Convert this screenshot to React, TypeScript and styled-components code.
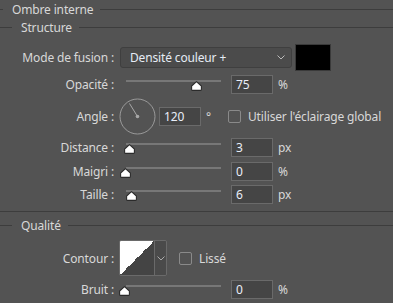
import * as React from 'react';
import styled, {createGlobalStyle} from "styled-components";

const GlobalStyle = createGlobalStyle`
  body {
    margin: 0;
    background: #535353;
  }
`

const Panel = styled.div`
  width: 393px;
  height: 303px;
  overflow: hidden;
  background: #535353;
  color: #d8d8d8;
  font-family: "Noto Sans", "Open Sans", sans-serif;
  font-size: 12px;
  letter-spacing: -0.15px;
  display: flex;
  flex-direction: column;
`

const GroupTitle = styled.div<{ indent: number; height: number }>`
  display: flex;
  align-items: center;
  height: ${p => p.height}px;
  white-space: nowrap;

  &::before {
    content: "";
    width: ${p => p.indent}px;
    height: 1px;
    background: #3d3d3d;
    margin-right: 9px;
  }

  &::after {
    content: "";
    flex: 1;
    height: 1px;
    background: #3d3d3d;
    margin-left: 7px;
  }
`

const Separator = styled.div`
  height: 1px;
  background: #3d3d3d;
  margin: 7px 0 3px;
`

const Row = styled.div<{ mt: number; h: number }>`
  display: flex;
  align-items: center;
  margin-top: ${p => p.mt}px;
  height: ${p => p.h}px;
`

const Label = styled.div`
  width: 114px;
  text-align: right;
  white-space: nowrap;
  flex-shrink: 0;
`

const Select = styled.div`
  margin-left: 6px;
  width: 172px;
  height: 21px;
  box-sizing: border-box;
  border: 1px solid #3f3f3f;
  border-radius: 3px;
  background: #4b4b4b;
  display: flex;
  align-items: center;
  justify-content: space-between;
  padding: 0 6px 0 9px;
  color: #e6ecf5;
`

const Swatch = styled.div`
  margin-left: 3px;
  width: 36px;
  height: 27px;
  box-sizing: border-box;
  border: 1px solid #3a3a3a;
  background: #000;
`

const SliderBox = styled.div`
  position: relative;
  margin-left: 6px;
  width: 101px;
  align-self: stretch;
`

const Track = styled.div`
  position: absolute;
  left: 6px;
  right: 0;
  top: 5px;
  height: 2px;
  background: #777;
`

const Thumb = styled.svg`
  position: absolute;
  top: 6px;
`

const NumInput = styled.div<{ ml: number }>`
  margin-left: ${p => p.ml}px;
  width: 42px;
  height: 19px;
  box-sizing: border-box;
  border: 1px solid #6a6a6a;
  background: #454545;
  color: #e9eef8;
  padding-left: 4px;
  display: flex;
  align-items: center;
`

const Unit = styled.span`
  margin-left: 5px;
`

const Check = styled.div<{ ml: number }>`
  margin-left: ${p => p.ml}px;
  width: 13px;
  height: 13px;
  box-sizing: border-box;
  border: 1px solid #8a8a8a;
  border-radius: 2px;
  margin-right: 7px;
`

const AngleDial = styled.svg`
  margin-left: 5px;
`

const ContourBox = styled.div`
  margin-left: 5px;
  width: 48px;
  height: 36px;
  box-sizing: border-box;
  border: 1px solid #6a6a6a;
  border-radius: 2px;
  display: flex;
  overflow: hidden;
`

const ContourPreview = styled.div`
  width: 34px;
  background: linear-gradient(to bottom right, #fff 50%, #444 50%);
  border-right: 1px solid #6a6a6a;
`

const ContourArrow = styled.div`
  flex: 1;
  background: #4a4a4a;
  display: flex;
  align-items: center;
  justify-content: center;
`

const Chevron = ({color = "#bbb"}: { color?: string }) => (
    <svg width="8" height="5" viewBox="0 0 8 5">
        <path d="M0.5 0.5 L4 4 L7.5 0.5" fill="none" stroke={color} strokeWidth="1"/>
    </svg>
)

const Slider = ({pos}: { pos: number }) => (
    <SliderBox>
        <Track/>
        <Thumb width="11" height="10" viewBox="0 0 11 10" style={{left: pos - 5}}>
            <path d="M5.5 0.6 L10.4 5 L10.4 8.4 Q10.4 9.4 9.4 9.4 L1.6 9.4 Q0.6 9.4 0.6 8.4 L0.6 5 Z"
                  fill="#fff" stroke="#2b2b2b" strokeWidth="1.1"/>
        </Thumb>
    </SliderBox>
)

const SliderRow = ({label, pos, value, unit, mt}: { label: string; pos: number; value: string; unit: string; mt: number }) => (
    <Row mt={mt} h={19}>
        <Label>{label}</Label>
        <Slider pos={pos}/>
        <NumInput ml={10}>{value}</NumInput>
        <Unit>{unit}</Unit>
    </Row>
)

export default function App() {
    return (
        <>
            <GlobalStyle/>
            <Panel>
                <GroupTitle indent={3} height={18}>Ombre interne</GroupTitle>
                <GroupTitle indent={12} height={19}>Structure</GroupTitle>

                <Row mt={7} h={27}>
                    <Label>Mode de fusion :</Label>
                    <Select>
                        <span>Densité couleur +</span>
                        <Chevron/>
                    </Select>
                    <Swatch/>
                </Row>

                <SliderRow label="Opacité :" pos={76} value="75" unit="%" mt={4}/>

                <Row mt={4} h={37}>
                    <Label>Angle :</Label>
                    <AngleDial width="37" height="37" viewBox="0 0 37 37">
                        <circle cx="18.5" cy="18.5" r="17.5" fill="none" stroke="#9a9a9a" strokeWidth="1"/>
                        <line x1="18.5" y1="18.5" x2="10.5" y2="5.5" stroke="#a8a8a8" strokeWidth="1"/>
                        <circle cx="18.5" cy="18.5" r="1.8" fill="#a8a8a8"/>
                    </AngleDial>
                    <NumInput ml={3}>120</NumInput>
                    <Unit>°</Unit>
                    <Check ml={17}/>
                    <span>Utiliser l'éclairage global</span>
                </Row>

                <SliderRow label="Distance :" pos={9} value="3" unit="px" mt={3}/>
                <SliderRow label="Maigri :" pos={5} value="0" unit="%" mt={5}/>
                <SliderRow label="Taille :" pos={11} value="6" unit="px" mt={4}/>

                <Separator/>
                <GroupTitle indent={12} height={20}>Qualité</GroupTitle>

                <Row mt={5} h={36}>
                    <Label>Contour :</Label>
                    <ContourBox>
                        <ContourPreview/>
                        <ContourArrow><Chevron color="#aaa"/></ContourArrow>
                    </ContourBox>
                    <Check ml={12}/>
                    <span>Lissé</span>
                </Row>

                <SliderRow label="Bruit :" pos={4} value="0" unit="%" mt={4}/>
            </Panel>
        </>
    );
}
